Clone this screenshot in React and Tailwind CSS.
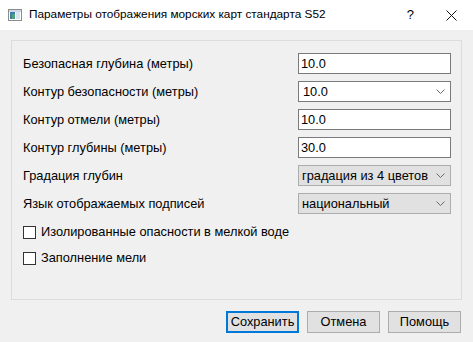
import React, { useState } from 'react'

const font = { fontFamily: '"Liberation Sans", Arial, sans-serif' }

const Chevron = () => (
    <svg width="9" height="6" viewBox="0 0 9 6" className="shrink-0">
        <path d="M0.5 0.5 L4.5 4.5 L8.5 0.5" fill="none" stroke="#6b6b6b" strokeWidth="1" />
    </svg>
)

const TextField = ({ value }) => (
    <div className="h-[21px] w-[153px] border border-[#7a7a7a] bg-white flex items-center pl-[2px] text-[12.8px] text-black">
        {value}
    </div>
)

const EditCombo = ({ value }) => (
    <div className="h-[21px] w-[153px] border border-[#7a7a7a] bg-white flex items-center justify-between pl-[4px] pr-[5px] text-[12.8px] text-black">
        <span>{value}</span>
        <Chevron />
    </div>
)

const Combo = ({ value }) => (
    <div className="h-[21px] w-[153px] border border-[#adadad] bg-[#e1e1e1] flex items-center justify-between pl-[3px] pr-[5px] text-[12.8px] text-black">
        <span className="whitespace-nowrap">{value}</span>
        <Chevron />
    </div>
)

const Check = ({ label }) => {
    const [checked, setChecked] = useState(false)
    return (
        <div className="h-[20px] flex items-center gap-[5px] cursor-default" onClick={() => setChecked(!checked)}>
            <div className="w-[13px] h-[13px] border border-[#333333] bg-white flex items-center justify-center">
                {checked && <span className="text-[10px] leading-none">✓</span>}
            </div>
            <span className="text-[12.8px] text-black">{label}</span>
        </div>
    )
}

const Button = ({ children, primary }) => (
    <button
        className={
            primary
                ? "h-[22px] w-[73px] border-2 border-[#0078d7] bg-[#e1e1e1] text-[12.8px] text-black flex items-center justify-center"
                : "h-[22px] w-[73px] border border-[#adadad] bg-[#e1e1e1] text-[12.8px] text-black flex items-center justify-center"
        }
    >
        {children}
    </button>
)

const rows = [
    { label: "Безопасная глубина (метры)", control: <TextField value="10.0" /> },
    { label: "Контур безопасности (метры)", control: <EditCombo value="10.0" /> },
    { label: "Контур отмели (метры)", control: <TextField value="10.0" /> },
    { label: "Контур глубины (метры)", control: <TextField value="30.0" /> },
    { label: "Градация глубин", control: <Combo value="градация из 4 цветов" /> },
    { label: "Язык отображаемых подписей", control: <Combo value="национальный" /> },
]

export default function App() {
    return (
        <div className="w-[473px] h-[342px] bg-[#f0f0f0] flex flex-col overflow-hidden" style={font}>
            {/* title bar */}
            <div className="h-[30px] bg-white flex items-center shrink-0">
                <svg width="14" height="12" viewBox="0 0 14 12" className="ml-[8px]">
                    <rect x="0.5" y="0.5" width="13" height="11" fill="#ffffff" stroke="#8c8c8c" />
                    <rect x="1" y="1" width="12" height="2" fill="#cfd8e4" />
                    <rect x="2" y="3" width="5" height="7" fill="#3b7fa8" />
                    <rect x="4" y="5" width="3" height="5" fill="#4fa37a" />
                    <rect x="8" y="3" width="4" height="7" fill="#d9e4ee" />
                </svg>
                <span className="ml-[7px] text-[11.8px] text-black">Параметры отображения морских карт стандарта S52</span>
                <span className="ml-auto mr-[32px] text-[13px] text-black">?</span>
                <svg width="11" height="11" viewBox="0 0 11 11" className="mr-[16px]">
                    <path d="M0.5 0.5 L10.5 10.5 M10.5 0.5 L0.5 10.5" stroke="#111" strokeWidth="1" />
                </svg>
            </div>

            {/* body */}
            <div className="flex flex-col pl-[11px] pr-[11px] pt-[10px]">
                <div className="h-[260px] border border-[#dcdcdc] flex flex-col pl-[11px] pr-[10px] pt-[12px]">
                    <div className="flex flex-col gap-[7px]">
                        {rows.map((row, i) => (
                            <div key={i} className="flex items-center justify-between">
                                <span className="text-[12.8px] text-black">{row.label}</span>
                                {row.control}
                            </div>
                        ))}
                    </div>
                    <div className="flex flex-col gap-[6px] mt-[8px]">
                        <Check label="Изолированные опасности в мелкой воде" />
                        <Check label="Заполнение мели" />
                    </div>
                </div>
                <div className="flex justify-end gap-[8px] mt-[11px] pr-[1px]">
                    <Button primary>Сохранить</Button>
                    <Button>Отмена</Button>
                    <Button>Помощь</Button>
                </div>
            </div>
        </div>
    )
}
